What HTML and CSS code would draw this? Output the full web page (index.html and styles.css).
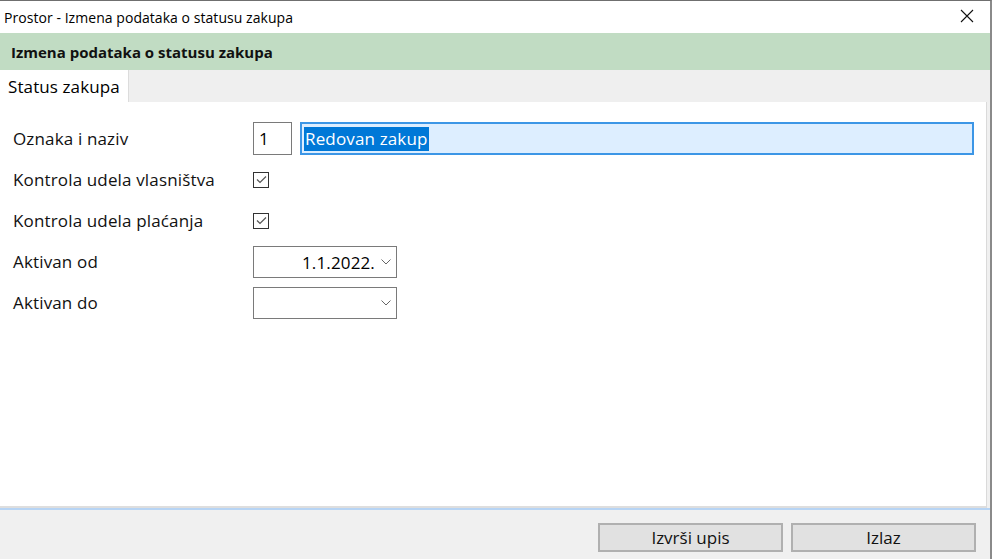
FILE: index.html
```html
<!DOCTYPE html>
<html><head>
<meta charset="utf-8">
<title>Prostor - Izmena podataka o statusu zakupa</title>
<link rel="stylesheet" href="styles.css"></head><body>
<div class="window">
    <div class="titlebar">
        <span class="title">Prostor - Izmena podataka o statusu zakupa</span>
        <svg class="close" width="14" height="14" viewBox="0 0 14 14"><path d="M1 1L13 13M13 1L1 13" stroke="#111" stroke-width="1.1" fill="none"/></svg>
    </div>
    <div class="header">Izmena podataka o statusu zakupa</div>
    <div class="tabs"><div class="tab">Status zakupa</div></div>
    <div class="panel">
        <div class="form">
            <div class="lbl">Oznaka i naziv</div>
            <div class="field">
                <div class="box code">1</div>
                <div class="box name"><span class="sel">Redovan zakup</span></div>
            </div>

            <div class="lbl">Kontrola udela vlasništva</div>
            <div class="field"><span class="check"><svg width="13" height="13" viewBox="0 0 13 13"><path d="M2 6.5L5 9.5L11 3.5" stroke="#555" stroke-width="1.2" fill="none"/></svg></span></div>

            <div class="lbl">Kontrola udela plaćanja</div>
            <div class="field"><span class="check"><svg width="13" height="13" viewBox="0 0 13 13"><path d="M2 6.5L5 9.5L11 3.5" stroke="#555" stroke-width="1.2" fill="none"/></svg></span></div>

            <div class="lbl">Aktivan od</div>
            <div class="field">
                <div class="box date"><span class="val">1.1.2022.</span><svg class="chev" width="10" height="6" viewBox="0 0 10 6"><path d="M0.5 0.5L5 5L9.5 0.5" stroke="#666" stroke-width="1" fill="none"/></svg></div>
            </div>

            <div class="lbl">Aktivan do</div>
            <div class="field">
                <div class="box date"><span class="val"></span><svg class="chev" width="10" height="6" viewBox="0 0 10 6"><path d="M0.5 0.5L5 5L9.5 0.5" stroke="#666" stroke-width="1" fill="none"/></svg></div>
            </div>
        </div>
    </div>
    <div class="footer">
        <button class="btn">Izvrši upis</button>
        <button class="btn">Izlaz</button>
    </div>
</div>
</body></html>
```

FILE: styles.css
```css
body{margin:0;padding:0;font-family:"Open Sans","Noto Sans",sans-serif;color:#000;background:#fff;}
.window{width:990px;height:558px;border-top:1px solid #6f6f6f;border-right:2px solid #8a8a8a;display:flex;flex-direction:column;background:#f0f0f0;}

.titlebar{height:32px;background:#fff;display:flex;align-items:center;justify-content:space-between;padding:0 16px 0 4px;}
.title{font-size:14px;letter-spacing:0.05px;}
.close{display:block;margin-top:-2px;}

.header{height:37px;background:#c1dcc3;display:flex;align-items:center;padding-left:11px;font-size:15px;font-weight:bold;color:#111;}

.tabs{height:32px;background:#efefef;display:flex;}
.tab{width:120px;padding-left:8px;background:#fff;border-right:1px solid #dcdcdc;display:flex;align-items:center;font-size:17px;letter-spacing:0.1px;}

.panel{flex:1;background:#fff;margin-right:3px;border-right:1px solid #dadada;border-bottom:2px solid #dedede;padding:16px 0 0 13px;}
.form{display:grid;grid-template-columns:240px 1fr;grid-auto-rows:41.2px;align-items:center;font-size:17px;letter-spacing:0.15px;}
.lbl{color:#111;margin-top:-1px;}
.field{display:flex;align-items:center;}

.box{box-sizing:border-box;border:1px solid #7a7a7a;height:33px;display:flex;align-items:center;background:#fff;font-size:17px;}
.code{width:39px;padding-left:5px;}
.name{width:674px;margin-left:8px;background:#ddeeff;border:2px solid #3c96e6;padding-left:2px;}
.sel{background:#0078d7;color:#fff;padding:0 1px 1px 1px;}

.check{box-sizing:border-box;width:16px;height:16px;border:1px solid #333;display:flex;align-items:center;justify-content:center;}
.check svg{display:block;}

.date{width:144px;height:32px;justify-content:flex-end;padding-right:5px;}
.val{margin-right:6px;}
.chev{display:block;}

.footer{height:49px;border-top:2px solid #b7d4f4;display:flex;justify-content:flex-end;align-items:center;gap:8px;padding-right:14px;}
.btn{box-sizing:border-box;width:185px;height:29px;background:#e1e1e1;border:2px solid #b0b0b0;font-family:inherit;font-size:17px;color:#111;padding:0;margin-top:5px;}
```
